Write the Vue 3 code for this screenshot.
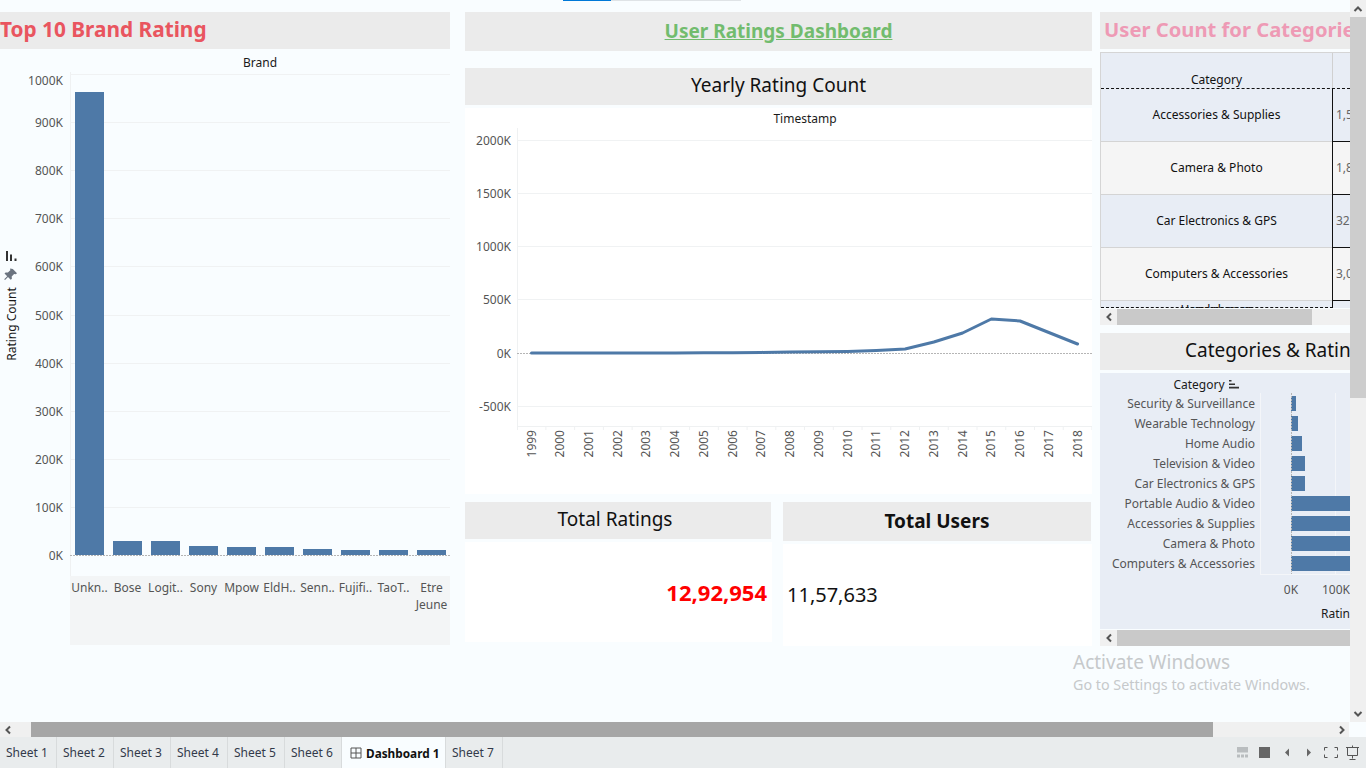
<script setup>
const brandTicks = [
  { label: '1000K', y: 74, textY: 85 },
  { label: '900K', y: 122, textY: 127 },
  { label: '800K', y: 170, textY: 175 },
  { label: '700K', y: 218, textY: 223 },
  { label: '600K', y: 266, textY: 271 },
  { label: '500K', y: 315, textY: 320 },
  { label: '400K', y: 363, textY: 368 },
  { label: '300K', y: 411, textY: 416 },
  { label: '200K', y: 459, textY: 464 },
  { label: '100K', y: 507, textY: 512 },
  { label: '0K', y: 555, textY: 560 }
]

const brands = [
  { name: ['Unkn..'], top: 92 },
  { name: ['Bose'], top: 541 },
  { name: ['Logit..'], top: 541 },
  { name: ['Sony'], top: 546 },
  { name: ['Mpow'], top: 547 },
  { name: ['EldH..'], top: 547 },
  { name: ['Senn..'], top: 549 },
  { name: ['Fujifi..'], top: 550 },
  { name: ['TaoT..'], top: 550 },
  { name: ['Etre', 'Jeune'], top: 550 }
]

const yearTicks = [
  { label: '2000K', y: 140 },
  { label: '1500K', y: 193 },
  { label: '1000K', y: 246 },
  { label: '500K', y: 299 },
  { label: '-500K', y: 406 }
]

const yearlyY = [353, 353, 353, 353, 353, 353, 352.8, 352.7, 352.4, 352, 351.8, 351.4, 350.5, 349, 342, 333, 319, 321, 332.5, 344]
const years = yearlyY.map((y, i) => ({ label: 1999 + i, x: 531.5 + 28.74 * i, y }))
const yearlyLine = years.map(p => `${p.x},${p.y}`).join(' ')

const categories = [
  { name: 'Security & Surveillance', width: 5 },
  { name: 'Wearable Technology', width: 7 },
  { name: 'Home Audio', width: 11 },
  { name: 'Television & Video', width: 14 },
  { name: 'Car Electronics & GPS', width: 14 },
  { name: 'Portable Audio & Video', width: 70 },
  { name: 'Accessories & Supplies', width: 70 },
  { name: 'Camera & Photo', width: 70 },
  { name: 'Computers & Accessories', width: 70 }
]

const tableRows = [
  { name: 'Accessories & Supplies', value: '1,5' },
  { name: 'Camera & Photo', value: '1,8' },
  { name: 'Car Electronics & GPS', value: '32' },
  { name: 'Computers & Accessories', value: '3,0' }
]

const sheetsBefore = ['Sheet 1', 'Sheet 2', 'Sheet 3', 'Sheet 4', 'Sheet 5', 'Sheet 6']
</script>

<template>
  <div class="app">
    <div class="work">
      <div class="canvas">
        <div class="top-progress"><span class="top-progress-fill"></span></div>

        <section class="col col-left">
          <h2 class="band title-red">Top 10 Brand Rating</h2>
          <svg class="chart-left" viewBox="0 50 450 595" width="450" height="595">
            <text class="axis-title" x="260" y="67" text-anchor="middle">Brand</text>
            <line class="axis" x1="70.5" y1="72" x2="70.5" y2="576" />
            <template v-for="t in brandTicks" :key="t.label">
              <line v-if="t.y !== 555" class="grid" x1="70" :y1="t.y + 0.5" x2="451" :y2="t.y + 0.5" />
              <text class="tick" x="63" :y="t.textY" text-anchor="end">{{ t.label }}</text>
            </template>
            <rect class="band-labels" x="70" y="576" width="380" height="69" />
            <g v-for="(b, i) in brands" :key="b.name[0]">
              <rect class="bar" :x="75 + 38 * i" :y="b.top" width="29" :height="555 - b.top" />
              <text
                v-for="(part, n) in b.name"
                :key="part"
                class="tick"
                :x="89.5 + 38 * i"
                :y="592 + 17 * n"
                text-anchor="middle"
              >{{ part }}</text>
            </g>
            <line class="zero" x1="70" y1="555.5" x2="450" y2="555.5" />
            <text class="axis-title" transform="rotate(-90 16 324)" x="16" y="324" text-anchor="middle">Rating Count</text>
            <path class="icon-dark" d="M6 251h2v10H6zM10 254.5h2v6.500h-2zM14.500 258.500h2v2.500h-2z" />
            <path class="icon-pin" d="M12.800 269l4.200 4.200-1.200 1-1.700-.2-2.400 2.400.2 2.300-1.200 1.100-2.700-2.700-3 3-.8-.8 3-3-2.700-2.700 1.100-1.200 2.300.2 2.400-2.400-.2-1.700z" />
          </svg>
        </section>

        <section class="col col-mid">
          <h1 class="band band-main"><span class="title-green">User Ratings Dashboard</span></h1>
          <h2 class="band band-year">Yearly Rating Count</h2>
          <svg class="chart-mid" viewBox="465 108 627 386" width="627" height="386">
            <text class="axis-title" x="805" y="123" text-anchor="middle">Timestamp</text>
            <line class="axis" x1="517.5" y1="128" x2="517.5" y2="430" />
            <line class="axis" x1="517" y1="426.5" x2="1092" y2="426.5" />
            <g v-for="t in yearTicks" :key="t.label">
              <line class="grid" x1="517" :y1="t.y + 0.5" x2="1092" :y2="t.y + 0.5" />
              <text class="tick" x="511" :y="t.y + 5" text-anchor="end">{{ t.label }}</text>
            </g>
            <text class="tick" x="511" y="358" text-anchor="end">0K</text>
            <line class="zero" x1="517" y1="353.5" x2="1092" y2="353.5" />
            <g v-for="p in years" :key="p.label">
              <line class="axis" :x1="p.x + 14.4" y1="426" :x2="p.x + 14.4" y2="430" />
              <text
                class="tick"
                :transform="`rotate(-90 ${p.x + 4} 430)`"
                :x="p.x + 4"
                y="430"
                text-anchor="end"
              >{{ p.label }}</text>
            </g>
            <polyline class="trend" :points="yearlyLine" />
          </svg>

          <div class="tiles">
            <div class="tile tile-ratings">
              <h2 class="band tile-head">Total Ratings</h2>
              <div class="tile-value value-red">12,92,954</div>
            </div>
            <div class="tile tile-users">
              <h2 class="band tile-head tile-head-bold">Total Users</h2>
              <div class="tile-value value-black">11,57,633</div>
            </div>
          </div>
        </section>

        <section class="col col-right">
          <h2 class="band title-pink">User Count for Categories</h2>
          <div class="cat-table">
            <div class="row row-head">
              <div class="cell-name">Category</div>
              <div class="cell-value"></div>
            </div>
            <div v-for="r in tableRows" :key="r.name" class="row">
              <div class="cell-name">{{ r.name }}</div>
              <div class="cell-value">{{ r.value }}</div>
            </div>
            <div class="row row-cut">
              <div class="cell-name">Headphones</div>
              <div class="cell-value"></div>
            </div>
            <div class="table-dash"></div>
          </div>
          <div class="mini-scroll">
            <span class="mini-arrow">
              <svg width="8" height="10" viewBox="0 0 8 10"><polyline class="chev" points="6,1.5 2.5,5 6,8.5" /></svg>
            </span>
            <span class="mini-thumb thumb-short"></span>
          </div>

          <h2 class="band band-cat">Categories &amp; Ratings</h2>
          <svg class="chart-cat" viewBox="1100 373 250 256" width="250" height="256">
            <text class="axis-title" x="1199" y="389" text-anchor="middle">Category</text>
            <path class="icon-dark" d="M1229 380h2.500v1.600H1229zM1229 383.400h6v1.600h-6zM1229 386.800h10v1.600h-10z" />
            <line class="axis axis-cat" x1="1260.5" y1="393" x2="1260.5" y2="574" />
            <line class="axis axis-cat" x1="1260" y1="574.5" x2="1350" y2="574.5" />
            <line class="axis axis-cat" x1="1335.5" y1="393" x2="1335.5" y2="574" />
            <g v-for="(c, i) in categories" :key="c.name">
              <text class="tick" x="1255" :y="408 + 20 * i" text-anchor="end">{{ c.name }}</text>
              <rect class="bar" x="1291" :y="396 + 20 * i" :width="c.width" height="15" />
            </g>
            <line class="zero" x1="1291.5" y1="393" x2="1291.5" y2="574" />
            <text class="tick" x="1291" y="594" text-anchor="middle">0K</text>
            <text class="tick" x="1336" y="594" text-anchor="middle">100K</text>
            <text class="axis-title" x="1321" y="618">Rating Count</text>
          </svg>
          <div class="mini-scroll">
            <span class="mini-arrow">
              <svg width="8" height="10" viewBox="0 0 8 10"><polyline class="chev" points="6,1.5 2.5,5 6,8.5" /></svg>
            </span>
            <span class="mini-thumb thumb-long"></span>
          </div>
        </section>

        <div class="activate">
          <div class="activate-big">Activate Windows</div>
          <div class="activate-small">Go to Settings to activate Windows.</div>
        </div>
      </div>

      <div class="vbar">
        <span class="vbar-arrow">
          <svg width="10" height="8" viewBox="0 0 10 8"><polyline class="chev" points="1.5,6 5,2.5 8.5,6" /></svg>
        </span>
        <span class="vbar-thumb"></span>
        <span class="vbar-space"></span>
        <span class="vbar-arrow">
          <svg width="10" height="8" viewBox="0 0 10 8"><polyline class="chev" points="1.5,2 5,5.5 8.5,2" /></svg>
        </span>
      </div>
    </div>

    <div class="hbar">
      <span class="hbar-start">
        <svg width="8" height="10" viewBox="0 0 8 10"><polyline class="chev" points="6,1.5 2.5,5 6,8.5" /></svg>
      </span>
      <span class="hbar-thumb"></span>
      <span class="hbar-end">
        <svg width="8" height="10" viewBox="0 0 8 10"><polyline class="chev" points="2,1.5 5.5,5 2,8.5" /></svg>
      </span>
      <span class="hbar-corner"></span>
    </div>

    <div class="tabs">
      <div v-for="s in sheetsBefore" :key="s" class="tab">{{ s }}</div>
      <div class="tab tab-active">
        <svg class="dash-icon" width="12" height="12" viewBox="0 0 12 12">
          <path d="M1 1h10v10H1zM6 1v10M1 6h10" />
        </svg>
        Dashboard 1
      </div>
      <div class="tab">Sheet 7</div>
      <div class="tab-tools">
        <svg width="123" height="16" viewBox="1237 748 123 16">
          <path class="tool-light" d="M1237 750h11v5.500h-11zM1237 757.500h3v3h-3zM1241 757.500h3v3h-3zM1245 757.500h3v3h-3z" />
          <rect class="tool-dark" x="1259" y="750" width="11" height="11" />
          <path class="tool-dark" d="M1289 751.500v8l-4-4zM1307 751.500v8l4-4z" />
          <path class="tool-line" d="M1324.500 753.500v-3h3M1334.500 750.500h3v3M1337.500 757.500v3h-3M1327.500 760.500h-3v-3" />
          <path class="tool-line" d="M1346 750.500h13M1347.500 750.500v8h10v-8M1352.500 748.500v2M1352.500 758.500v3M1349.500 762.500h6" />
        </svg>
      </div>
    </div>
  </div>
</template>

<style scoped>
.app {
  width: 1366px;
  height: 768px;
  display: flex;
  flex-direction: column;
  overflow: hidden;
  background: #f9fdff;
  font-family: "Noto Sans", "Open Sans", sans-serif;
}

.work {
  display: flex;
  height: 722px;
}

.canvas {
  position: relative;
  width: 1350px;
  box-sizing: border-box;
  padding-top: 12px;
  display: flex;
  align-items: flex-start;
  overflow: hidden;
}

.top-progress {
  position: absolute;
  left: 563px;
  top: 0;
  width: 178px;
  height: 1px;
  background: #dfe3e6;
}

.top-progress-fill {
  display: block;
  width: 48px;
  height: 1px;
  background: #0078d7;
}

.col {
  flex: none;
}

.col-left {
  width: 450px;
}

.col-mid {
  width: 627px;
  margin-left: 15px;
}

.col-right {
  width: 250px;
  margin-left: 8px;
  overflow: hidden;
}

.band {
  margin: 0;
  height: 37px;
  background: #ebebeb;
  line-height: 34px;
  font-size: 19px;
  font-weight: 400;
  color: #111;
  white-space: nowrap;
  overflow: hidden;
}

.title-red {
  color: #e9555f;
  font-size: 20.8px;
  font-weight: 700;
}

.chart-left,
.chart-mid,
.chart-cat {
  display: block;
}

.chart-left {
  margin-top: 1px;
}

.band-main {
  height: 39px;
  line-height: 38px;
  text-align: center;
}

.title-green {
  color: #72bc6e;
  font-size: 19px;
  font-weight: 700;
  text-decoration: underline;
}

.band-year {
  margin-top: 17px;
  text-align: center;
}

.chart-mid {
  margin-top: 3px;
  background: #fff;
}

.tiles {
  display: flex;
  align-items: flex-start;
  margin-top: 8px;
}

.tile-ratings {
  width: 307px;
}

.tile-users {
  width: 309px;
  margin-left: 11px;
}

.tile-ratings .tile-head {
  width: 306px;
  padding-right: 6px;
  box-sizing: border-box;
}

.tile-head {
  text-align: center;
}

.tile-head-bold {
  height: 39px;
  line-height: 38px;
  width: 308px;
  font-size: 19px;
  font-weight: 700;
}

.tile-value {
  margin-top: 3px;
  background: #fff;
  display: flex;
  align-items: center;
}

.value-red {
  height: 100px;
  justify-content: flex-end;
  padding-right: 5px;
  box-sizing: border-box;
  color: #ff0000;
  font-size: 22px;
  font-weight: 700;
}

.value-black {
  height: 102px;
  padding-left: 4px;
  padding-bottom: 2px;
  box-sizing: border-box;
  color: #111;
  font-size: 20px;
}

.title-pink {
  color: #ee9ab5;
  font-size: 20.2px;
  font-weight: 700;
  padding-left: 4px;
}

.cat-table {
  position: relative;
  height: 256px;
  margin-top: 3px;
  box-sizing: border-box;
  border-top: 1px solid #d5d5d5;
  border-left: 1px solid #d5d5d5;
  overflow: hidden;
  font-size: 12px;
  color: #111;
}

.row {
  display: flex;
  height: 53px;
  box-sizing: border-box;
  background: #f5f5f5;
}

.row:nth-child(even) {
  background: #e8edf5;
}

.cell-name {
  width: 231px;
  flex: none;
  box-sizing: border-box;
  border-bottom: 1px solid #d4d4d4;
  padding-bottom: 2px;
  display: flex;
  align-items: center;
  justify-content: center;
}

.cell-value {
  flex: 1;
  box-sizing: border-box;
  border-left: 1px solid #111;
  border-bottom: 1px solid #111;
  padding-left: 3px;
  padding-bottom: 2px;
  display: flex;
  align-items: center;
  color: #666;
}

.row-head {
  height: 36px;
  background: #e8edf5;
  border-bottom: 1px dashed #111;
}

.row-head .cell-name {
  border-bottom: 0;
  align-items: flex-end;
  padding-bottom: 0;
  line-height: 16px;
}

.row-head .cell-value {
  border-left-color: #d0d0d0;
  border-bottom: 0;
}

.row.row-cut {
  height: 7px;
  background: #e8edf5;
}

.row-cut .cell-name {
  align-items: flex-start;
  border-bottom: 0;
  line-height: 14px;
  padding-top: 2px;
  padding-bottom: 0;
}

.row-cut .cell-value {
  border-bottom: 0;
}

.table-dash {
  position: absolute;
  left: 0;
  bottom: 0;
  width: 232px;
  border-bottom: 1px dashed #111;
}

.mini-scroll {
  display: flex;
  height: 16px;
  margin-top: 1px;
  background: #f0f0f0;
}

.mini-arrow {
  width: 17px;
  display: flex;
  align-items: center;
  justify-content: center;
}

.mini-thumb {
  display: block;
  background: #c9c9c9;
}

.thumb-short {
  width: 195px;
}

.thumb-long {
  width: 233px;
}

.band-cat {
  margin-top: 8px;
  padding-left: 85px;
}

.chart-cat {
  margin-top: 3px;
  background: #e8edf5;
}

.axis-title {
  font-size: 12px;
  fill: #1a1a1a;
}

.tick {
  font-size: 12px;
  fill: #555;
}

.grid {
  stroke: #f0f2f3;
  stroke-width: 1;
}

.axis {
  stroke: #eff1f2;
  stroke-width: 1;
}

.axis-cat {
  stroke: #f4f6f9;
}

.zero {
  stroke: #b5b5b5;
  stroke-width: 1;
  stroke-dasharray: 2 1;
}

.bar {
  fill: #4e79a7;
}

.band-labels {
  fill: #f3f5f6;
}

.trend {
  fill: none;
  stroke: #4e79a7;
  stroke-width: 3;
  stroke-linejoin: round;
  stroke-linecap: round;
}

.icon-dark {
  fill: #333;
}

.icon-pin {
  fill: #6b7480;
}

.activate {
  position: absolute;
  left: 1073px;
  top: 650px;
  color: #c6c9cb;
  pointer-events: none;
  white-space: nowrap;
}

.activate-big {
  font-size: 19px;
  line-height: 25px;
}

.activate-small {
  font-size: 14.3px;
  line-height: 20px;
}

.vbar {
  width: 16px;
  height: 722px;
  display: flex;
  flex-direction: column;
  background: #f0f0f0;
}

.vbar-arrow {
  height: 17px;
  flex: none;
  display: flex;
  align-items: center;
  justify-content: center;
}

.vbar-thumb {
  height: 381px;
  flex: none;
  background: #cdcdcd;
}

.vbar-space {
  flex: 1;
}

.chev {
  fill: none;
  stroke: #555;
  stroke-width: 2;
}

.hbar {
  display: flex;
  height: 15px;
  background: #f0f0f0;
}

.hbar-start {
  width: 31px;
  display: flex;
  align-items: center;
  padding-left: 4px;
  box-sizing: border-box;
}

.hbar-thumb {
  width: 1182px;
  background: #a6a6a6;
}

.hbar-end {
  width: 136px;
  display: flex;
  align-items: center;
  justify-content: flex-end;
  padding-right: 3px;
  box-sizing: border-box;
}

.hbar-corner {
  flex: 1;
  background: #f9fdff;
}

.tabs {
  display: flex;
  height: 31px;
  background: #e9eced;
  font-size: 12px;
  color: #333a4a;
}

.tab {
  width: 57px;
  box-sizing: border-box;
  border-right: 1px solid #d8dbdc;
  padding-left: 6px;
  display: flex;
  align-items: center;
  white-space: nowrap;
}

.tab-active {
  width: 104px;
  padding-left: 8px;
  background: #f9fdff;
  font-weight: 700;
  font-size: 11.8px;
  color: #111;
  gap: 4px;
}

.dash-icon path {
  fill: none;
  stroke: #555;
  stroke-width: 1;
}

.tab-tools {
  margin-left: auto;
  width: 129px;
  display: flex;
  align-items: center;
}

.tool-light {
  fill: #b9bdbf;
}

.tool-dark {
  fill: #666;
}

.tool-line {
  fill: none;
  stroke: #555;
  stroke-width: 1;
}
</style>

<style>
html,
body {
  margin: 0;
  overflow: hidden;
}
</style>
